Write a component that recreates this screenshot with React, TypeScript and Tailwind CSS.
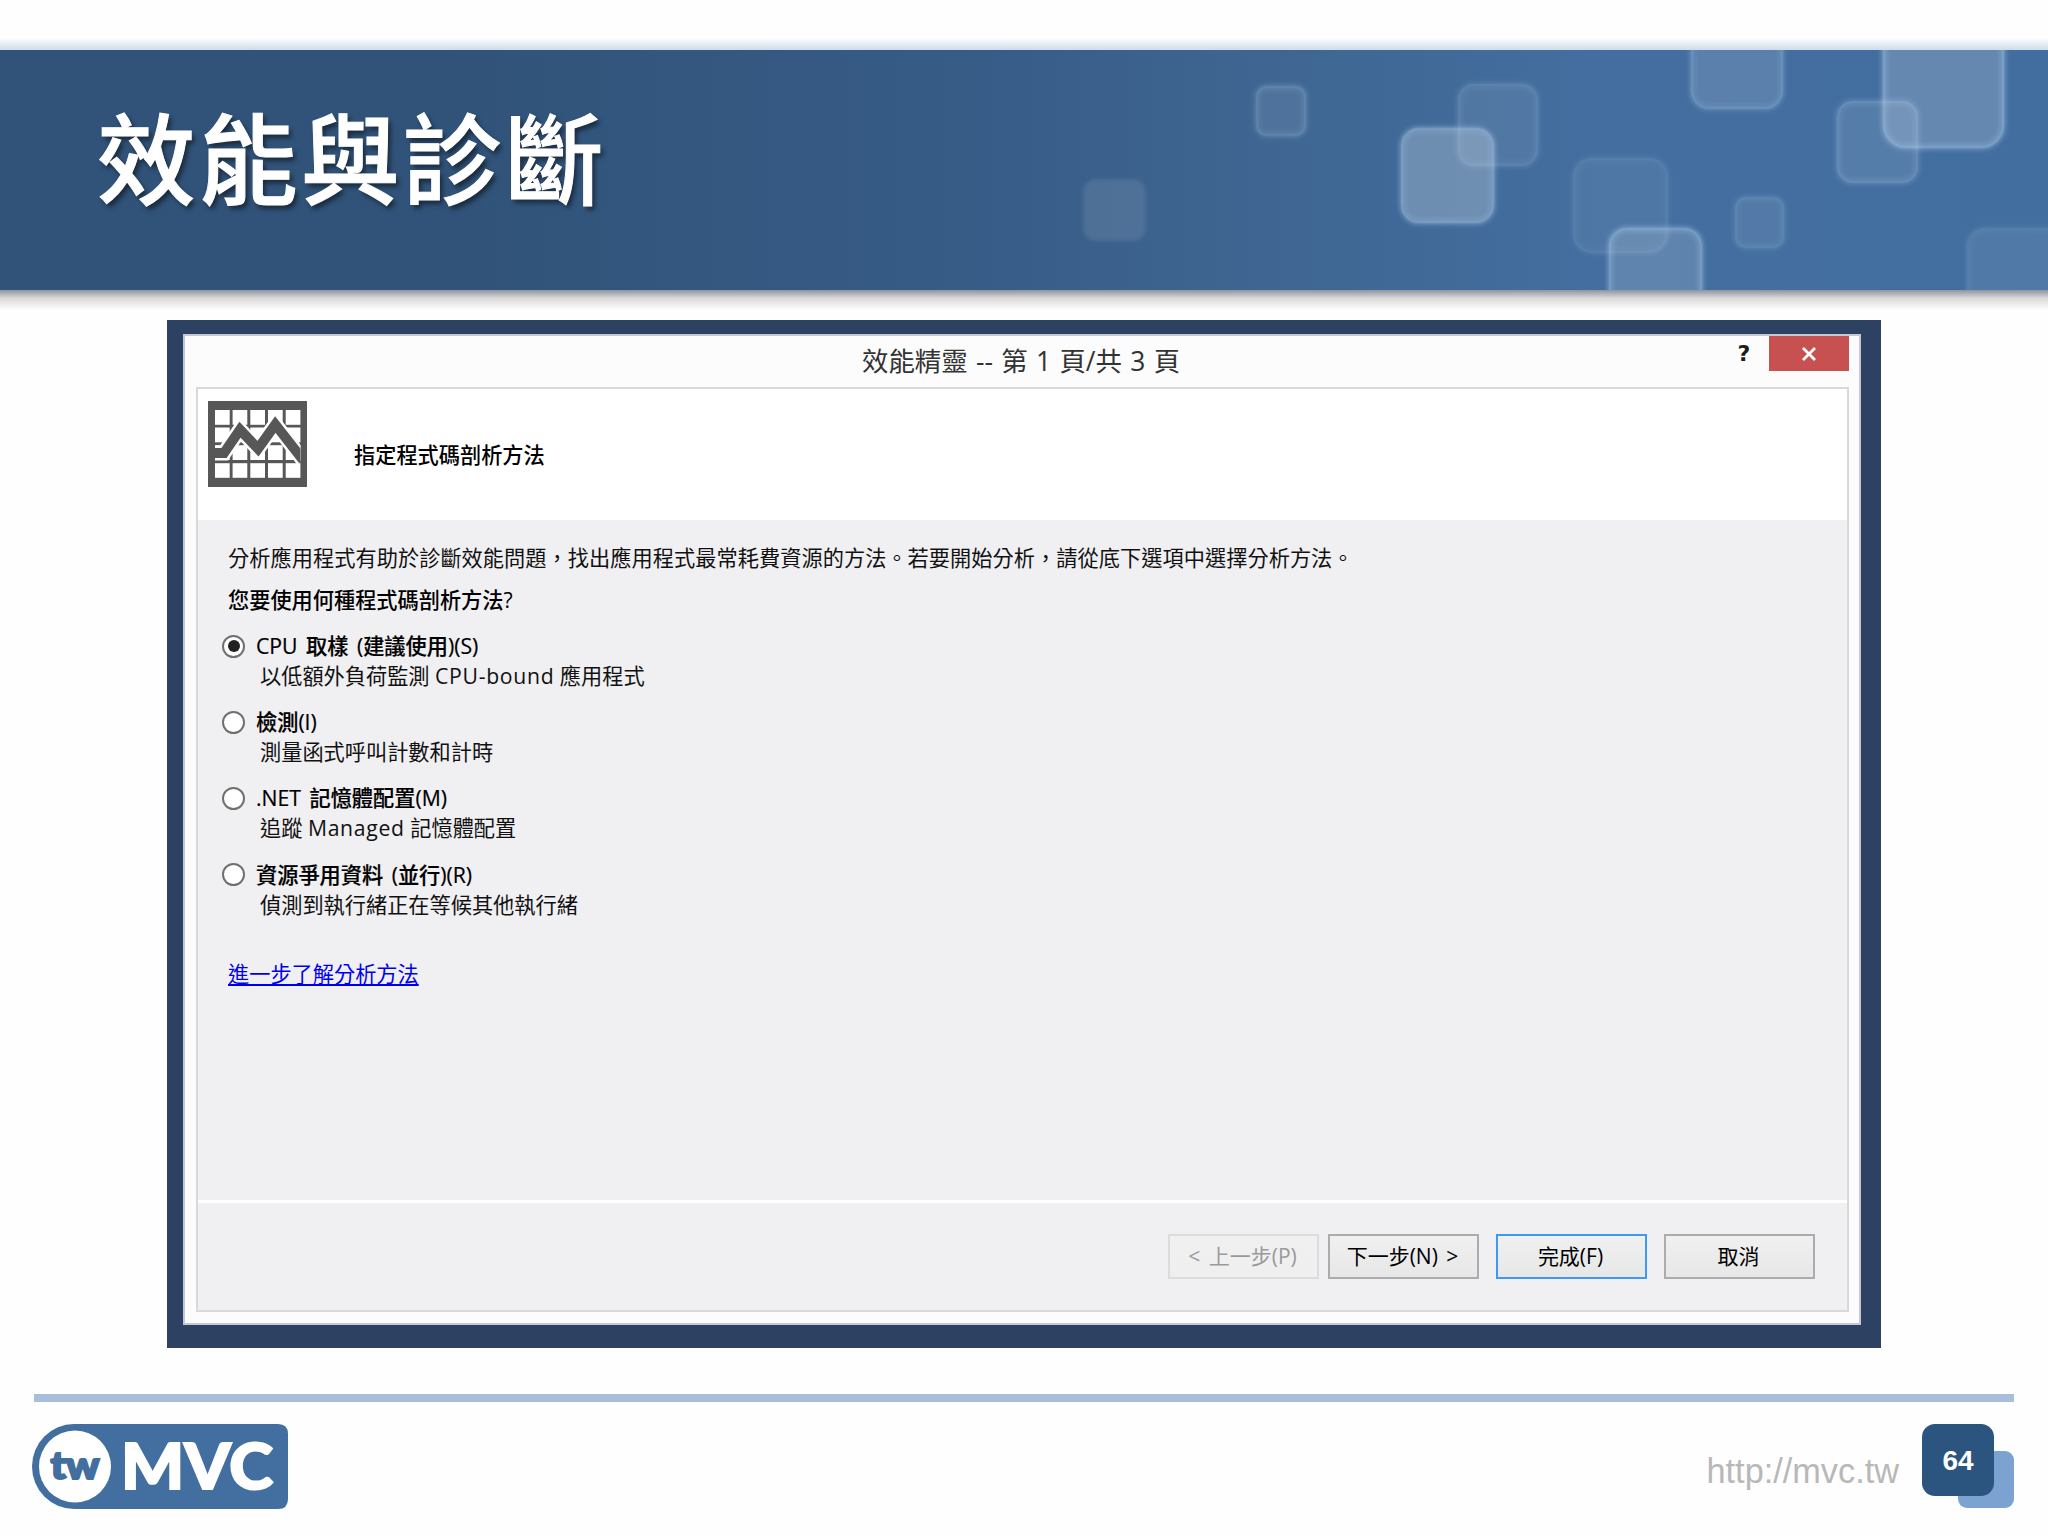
import clsx from 'clsx'

type Square = { x: number; y: number; w: number; h: number; r: number; fill: number; stroke: number }

const squares: Square[] = [
  { x: 1084, y: 180, w: 61, h: 60, r: 12, fill: 0.1, stroke: 0.03 },
  { x: 1257, y: 87, w: 48, h: 48, r: 10, fill: 0.08, stroke: 0.2 },
  { x: 1459, y: 85, w: 78, h: 80, r: 15, fill: 0.08, stroke: 0.15 },
  { x: 1402, y: 129, w: 91, h: 93, r: 17, fill: 0.24, stroke: 0.34 },
  { x: 1574, y: 159, w: 93, h: 93, r: 18, fill: 0.06, stroke: 0.11 },
  { x: 1692, y: 10, w: 90, h: 98, r: 17, fill: 0.12, stroke: 0.24 },
  { x: 1838, y: 102, w: 79, h: 80, r: 15, fill: 0.1, stroke: 0.22 },
  { x: 1884, y: 0, w: 119, h: 147, r: 22, fill: 0.18, stroke: 0.38 },
  { x: 1736, y: 198, w: 47, h: 49, r: 10, fill: 0.08, stroke: 0.15 },
  { x: 1610, y: 229, w: 91, h: 98, r: 17, fill: 0.15, stroke: 0.36 },
  { x: 1968, y: 229, w: 100, h: 98, r: 17, fill: 0.08, stroke: 0.1 },
]

const options = [
  { label: 'CPU 取樣 (建議使用)(S)', hint: '以低額外負荷監測 CPU-bound 應用程式', checked: true },
  { label: '檢測(I)', hint: '測量函式呼叫計數和計時', checked: false },
  { label: '.NET 記憶體配置(M)', hint: '追蹤 Managed 記憶體配置', checked: false },
  { label: '資源爭用資料 (並行)(R)', hint: '偵測到執行緒正在等候其他執行緒', checked: false },
]

function HeaderSquares() {
  return (
    <svg className="absolute inset-0 h-full w-full" viewBox="0 50 2048 240" preserveAspectRatio="none">
      <defs>
        <filter id="soft" x="-20%" y="-20%" width="140%" height="140%">
          <feGaussianBlur stdDeviation="2" />
        </filter>
      </defs>
      {squares.map((s, i) => (
        <g key={i}>
          <rect x={s.x} y={s.y} width={s.w} height={s.h} rx={s.r} fill="#fff" fillOpacity={s.fill} filter="url(#soft)" />
          <rect x={s.x} y={s.y} width={s.w} height={s.h} rx={s.r} fill="none" stroke="#b4d4f6" strokeOpacity={s.stroke * 0.8} strokeWidth="6" filter="url(#soft)" />
          <rect x={s.x} y={s.y} width={s.w} height={s.h} rx={s.r} fill="none" stroke="#b4d4f6" strokeOpacity={s.stroke * 0.5} strokeWidth="2.5" />
        </g>
      ))}
    </svg>
  )
}

function Header() {
  return (
    <header className="relative mt-[50px] flex h-[240px] shrink-0 items-start overflow-hidden bg-[linear-gradient(90deg,#315379_0%,#315379_22%,#33577f_34%,#385d88_50%,#3f6692_62%,#436e9f_78%,#426e9f_100%)] pl-[97px]">
      <HeaderSquares />
      <h1 className="relative mt-[49px] text-[98.5px] leading-[120px] font-medium tracking-[3.5px] text-white [-webkit-text-stroke:1px_#fff] [text-shadow:3px_4px_5px_rgba(0,0,0,0.5)]">
        效能與診斷
      </h1>
    </header>
  )
}

function ChartIcon() {
  return (
    <svg className="h-[86px] w-[99px] shrink-0" viewBox="0 0 99 86">
      <rect width="99" height="86" fill="#575757" />
      {[9, 26.5, 44.2].map((y) =>
        [7, 24.6, 42.3, 60, 77.7].map((x) => (
          <rect key={`${x}-${y}`} x={x} y={y} width="14.7" height="14.8" fill="#fff" />
        ))
      )}
      {[7, 24.6, 42.3, 60, 77.7].map((x) => (
        <rect key={x} x={x} y="62.2" width="14.7" height="14.6" fill="#fff" />
      ))}
      <svg x="7" y="9" width="85.4" height="68" viewBox="7 9 85.4 68">
        <path d="M5 52H16L32 28.7L50 47.7L67.3 23.5L95 59" fill="none" stroke="#fff" strokeWidth="15" />
        <path d="M5 52H16L32 28.7L50 47.7L67.3 23.5L95 59" fill="none" stroke="#575757" strokeWidth="10" />
      </svg>
    </svg>
  )
}

function Radio({ checked }: { checked: boolean }) {
  return (
    <span className="flex size-[23px] shrink-0 items-center justify-center rounded-full border-2 border-[#707070] bg-white">
      {checked && <span className="size-[12px] rounded-full bg-[#212121]" />}
    </span>
  )
}

// Latin words get a little extra tracking next to the CJK glyphs
function Hint({ text }: { text: string }) {
  return (
    <p className="pl-[38px] leading-[30px]">
      {text.split(/([A-Za-z-]+)/).map((part, i) => (
        <span key={i} className={clsx(i % 2 === 1 && 'tracking-[0.7px]')}>
          {part}
        </span>
      ))}
    </p>
  )
}

function DialogButton({ children, className }: { children: string; className?: string }) {
  return (
    <button
      className={clsx(
        'flex h-[45px] w-[151px] items-center justify-center border-2 bg-gradient-to-b pr-[2px] pb-px text-[21px] leading-[30px] whitespace-pre [word-spacing:3px]',
        className
      )}
    >
      {children}
    </button>
  )
}

function Wizard() {
  return (
    <section className="mt-[30px] ml-[167px] h-[1028px] w-[1714px] shrink-0 bg-[#2d4162] pt-[14px] pl-[16px]">
      <div className="flex h-[991px] w-[1678px] flex-col border-2 border-[#c3c8d4] bg-[#fcfcfd] pr-[10px] pb-[11px] pl-[11px]">
        <div className="flex h-[51px] shrink-0">
          <div className="w-[666px]" />
          <div className="w-[330px] text-[26.4px] leading-[51px] whitespace-nowrap text-[#333] [word-spacing:1.5px]">
            效能精靈 -- 第 1 頁/共 3 頁
          </div>
          <div className="ml-auto flex h-[35px]">
            <span className="w-[50px] text-center font-['DejaVu_Sans'] text-[22px] leading-[36px] font-bold text-[#1c1c1c]">?</span>
            <span className="flex w-[80px] items-center justify-center bg-[#c75050]">
              <svg className="h-[14px] w-[16px]" viewBox="0 0 16 14">
                <path d="M2 1L14 13M14 1L2 13" stroke="#fff" strokeWidth="2.8" />
              </svg>
            </span>
          </div>
        </div>

        <div className="flex min-h-0 flex-1 flex-col border-2 border-[#d9d9dc] bg-[#f0eff1] text-[21.2px] text-[#111]">
          <div className="flex h-[131px] shrink-0 bg-white pt-[12px] pl-[10px]">
            <ChartIcon />
            <h2 className="mt-[39px] ml-[47px] text-[21.2px] leading-[30px] font-medium text-black">指定程式碼剖析方法</h2>
          </div>

          <div className="flex h-[680px] shrink-0 flex-col pl-[30px] whitespace-nowrap">
            <p className="mt-[23px] leading-[30px] tracking-[0.05px]">
              分析應用程式有助於診斷效能問題，找出應用程式最常耗費資源的方法。若要開始分析，請從底下選項中選擇分析方法。
            </p>
            <p className="mt-[12px] leading-[30px] font-medium text-black">您要使用何種程式碼剖析方法?</p>
            <div className="mt-[16px] -ml-[6px] flex flex-col gap-[16px]">
              {options.map((o) => (
                <div key={o.label} className="h-[60.2px]">
                  <label className="flex h-[30px] items-center gap-[11px] leading-[30px] font-medium text-black">
                    <Radio checked={o.checked} />
                    <span className="[word-spacing:3px] [-webkit-text-stroke:0.2px_#000]">{o.label}</span>
                  </label>
                  <Hint text={o.hint} />
                </div>
              ))}
            </div>
            <a className="mt-[39px] self-start leading-[30px] text-[#0000f0] underline decoration-2 underline-offset-[2px]">
              進一步了解分析方法
            </a>
          </div>

          <div className="flex flex-1 items-start border-t-3 border-white pt-[31px] pr-[32px]">
            <DialogButton className="ml-auto border-[#dcdcde] from-[#f0f0f1] to-[#efeff0] text-[#9a9a9a]">{'< 上一步(P)'}</DialogButton>
            <DialogButton className="ml-[9px] border-[#acacac] from-[#f0f0f0] to-[#e7e7e8] text-black">{'下一步(N) >'}</DialogButton>
            <DialogButton className="ml-[17px] border-[#3d9af0] from-[#f0f0f0] to-[#e7e7e8] text-black">完成(F)</DialogButton>
            <DialogButton className="ml-[17px] border-[#acacac] from-[#f0f0f0] to-[#e7e7e8] text-black">取消</DialogButton>
          </div>
        </div>
      </div>
    </section>
  )
}

function Logo() {
  return (
    <svg className="h-[85px] w-[256px]" viewBox="0 0 256 85">
      <path d="M42 0H246Q256 0 256 10V75Q256 85 246 85H42A42 42.5 0 0 1 42 0Z" fill="#426f9f" />
      <circle cx="43" cy="42.5" r="36" fill="#fff" />
      <text x="43" y="54.5" textAnchor="middle" textLength="49" lengthAdjust="spacingAndGlyphs" className="font-['Lato'] text-[37px] font-black" fill="#426f9f" stroke="#426f9f" strokeWidth="2">
        tw
      </text>
      <text x="89" y="65" textLength="152" lengthAdjust="spacingAndGlyphs" className="font-['Lato'] text-[62px] font-black" fill="#fff" stroke="#fff" strokeWidth="2">
        MVC
      </text>
    </svg>
  )
}

function Footer() {
  return (
    <footer className="mt-[46px] mr-[34px] ml-[32px] flex flex-col">
      <div className="ml-[2px] h-[8px] bg-[#a9bedb]" />
      <div className="mt-[22px] flex items-start">
        <Logo />
        <span className="mt-[27px] ml-auto font-['Liberation_Sans'] text-[34.3px] leading-[40px] text-[#b8b8b8]">http://mvc.tw</span>
        <div className="relative ml-[23px] h-[84px] w-[92px]">
          <div className="absolute right-0 bottom-0 h-[57px] w-[56px] rounded-[9px] bg-[#7ba2d0]" />
          <div className="relative flex size-[72px] items-center justify-center rounded-[13px] bg-[#2b547e] pt-[2px] font-['Liberation_Sans'] text-[28px] font-bold text-white">
            64
          </div>
        </div>
      </div>
    </footer>
  )
}

export default function App() {
  return (
    <div className="relative flex h-[1536px] w-[2048px] flex-col overflow-hidden bg-[#fefefe] font-['Open_Sans','Noto_Sans_CJK_TC',sans-serif]">
      {/* soft shadow above and below the banner */}
      <div className="absolute top-[38px] h-[12px] w-full bg-gradient-to-b from-transparent to-[#cfdcea]" />
      <div className="absolute top-[290px] h-[20px] w-full bg-gradient-to-b from-[#8d949f] via-[#d9d8d7] via-40% to-transparent" />
      <Header />
      <Wizard />
      <Footer />
    </div>
  )
}
